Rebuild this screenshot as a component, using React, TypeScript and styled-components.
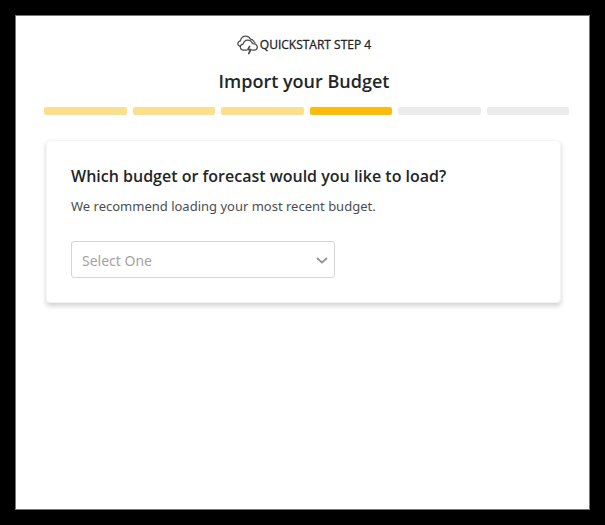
import React from "react";
import styled, { createGlobalStyle } from "styled-components";

const GlobalStyle = createGlobalStyle`
  *, *::before, *::after { box-sizing: border-box; }
  body {
    margin: 0;
    background: #000;
    color: #222628;
    font-family: "Open Sans", "Noto Sans", sans-serif;
  }
`;

const Frame = styled.div`
  display: flex;
  min-height: 100vh;
  padding: 15px;
  background: #000;
`;

const Panel = styled.main`
  flex: 1;
  min-width: 0;
  padding: 18px 20px 24px 28px;
  background: #fff;
  border: 1px solid #77777b;
`;

const Header = styled.header`
  display: flex;
  flex-direction: column;
  align-items: center;
  padding-right: 5px;
`;

const StepLabel = styled.p`
  display: flex;
  align-items: center;
  gap: 2px;
  margin: 0;
  font-size: 12px;
  line-height: 20px;
  -webkit-text-stroke: 0.3px currentColor;
`;

const Title = styled.h1`
  margin: 12px 0;
  font-size: 18px;
  font-weight: 600;
  line-height: 28px;
`;

const Progress = styled.ol`
  display: grid;
  grid-template-columns: repeat(6, 1fr);
  gap: 6px;
  margin: 0 0 25px;
  padding: 0;
  list-style: none;
`;

type StepState = "done" | "current" | "todo";

const stepColors: Record<StepState, string> = {
  done: "#fbdf8f",
  current: "#fdbc0a",
  todo: "#ececec",
};

const Step = styled.li<{ $state: StepState }>`
  height: 8px;
  border-radius: 2px;
  background: ${({ $state }) => stepColors[$state]};
`;

const Card = styled.section`
  margin: 0 8px 0 2px;
  padding: 23px 24px 24px;
  border: 1px solid #f4f4f4;
  border-radius: 4px;
  background: #fff;
  box-shadow: 0 3px 5px rgba(0, 0, 0, 0.18);
`;

const Question = styled.label`
  display: block;
  font-size: 16px;
  font-weight: 600;
  line-height: 24px;
`;

const Hint = styled.p`
  margin: 8px 0 25px;
  color: #4b4e51;
  font-family: "Noto Sans", "Open Sans", sans-serif;
  font-size: 13px;
  line-height: 20px;
`;

const SelectBox = styled.div`
  display: grid;
  align-items: center;
  width: 100%;
  max-width: 264px;

  > * { grid-area: 1 / 1; }

  > svg {
    justify-self: end;
    margin-right: 7px;
    pointer-events: none;
  }
`;

const Select = styled.select`
  appearance: none;
  width: 100%;
  height: 37px;
  padding: 1px 28px 0 10px;
  border: 1px solid #d6d6d6;
  border-radius: 3px;
  background: #fff;
  color: #a3a3a3;
  font-family: "Noto Sans", "Open Sans", sans-serif;
  font-size: 14px;
`;

const StormIcon = () => (
  <svg
    width="21"
    height="21"
    viewBox="0 0 20 20"
    fill="none"
    stroke="#4c4c4c"
    strokeWidth="1.2"
    strokeLinecap="round"
    strokeLinejoin="round"
    aria-hidden="true"
  >
    <path d="M2.600 11.600C.500 10.600.300 8.600 1.700 7.300l1.600-1C4 3.600 6 1.800 8.600 2c2 .1 3.500 1.200 4.200 2.800 1.400.1 2.600.9 3.100 2.200l1.100 1.300" />
    <path d="M9 15.400H6.200c-1.900-.1-3.100-1.300-3-3 .1-1.500 1.100-2.500 2.600-2.700.6-2.400 2.200-3.900 4.500-3.900 2.200 0 3.800 1.300 4.400 3.300 2.600-.1 4.600 1.200 4.600 3.200 0 1.800-1.400 3.100-3.500 3.100h-1" />
    <path d="m12 11.800-1.700 3h3l-2.100 3.800" strokeWidth="1.600" />
  </svg>
);

const ChevronIcon = () => (
  <svg
    width="12"
    height="12"
    viewBox="0 0 12 12"
    fill="none"
    stroke="#949494"
    strokeWidth="1.700"
    aria-hidden="true"
  >
    <path d="m1 4 5 4.500 5-4.500" />
  </svg>
);

const steps: StepState[] = ["done", "done", "done", "current", "todo", "todo"];

export default function App() {
  return (
    <>
      <GlobalStyle />
      <Frame>
        <Panel>
          <Header>
            <StepLabel>
              <StormIcon />
              QUICKSTART STEP 4
            </StepLabel>
            <Title>Import your Budget</Title>
          </Header>
          <Progress aria-label="Quickstart progress">
            {steps.map((state, index) => (
              <Step
                key={index}
                $state={state}
                aria-current={state === "current" ? "step" : undefined}
              />
            ))}
          </Progress>
          <Card>
            <Question htmlFor="budget">
              Which budget or forecast would you like to load?
            </Question>
            <Hint id="budget-hint">
              We recommend loading your most recent budget.
            </Hint>
            <SelectBox>
              <Select id="budget" aria-describedby="budget-hint" defaultValue="">
                <option value="">Select One</option>
              </Select>
              <ChevronIcon />
            </SelectBox>
          </Card>
        </Panel>
      </Frame>
    </>
  );
}
